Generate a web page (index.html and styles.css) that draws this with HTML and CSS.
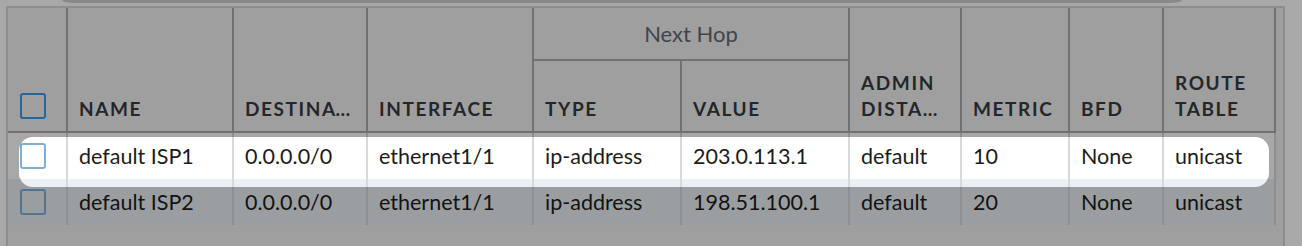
FILE: index.html
```html
<!DOCTYPE html>
<html lang="en">
<head>
<meta charset="utf-8">
<title>Static Routes</title>
<link rel="stylesheet" href="styles.css">
</head>
<body>
<div class="page">
  <div class="bar-slot"><div class="bar"></div></div>
  <div class="panel">
    <div class="grid">
      <div class="th th-tall th-chk"><span class="chk chk-head"></span></div>
      <div class="th th-tall"><span class="lbl">Name</span></div>
      <div class="th th-tall"><span class="lbl">Destination</span></div>
      <div class="th th-tall"><span class="lbl">Interface</span></div>
      <div class="th th-group">Next Hop</div>
      <div class="th th-tall"><span class="lbl lbl-2">Admin Distance</span></div>
      <div class="th th-tall"><span class="lbl">Metric</span></div>
      <div class="th th-tall"><span class="lbl">BFD</span></div>
      <div class="th th-tall"><span class="lbl lbl-2">Route Table</span></div>
      <div class="th"><span class="lbl">Type</span></div>
      <div class="th"><span class="lbl">Value</span></div>

      <div class="td td-chk row-a"><span class="chk"></span></div>
      <div class="td row-a">default ISP1</div>
      <div class="td row-a">0.0.0.0/0</div>
      <div class="td row-a">ethernet1/1</div>
      <div class="td row-a">ip-address</div>
      <div class="td row-a">203.0.113.1</div>
      <div class="td row-a">default</div>
      <div class="td row-a">10</div>
      <div class="td row-a">None</div>
      <div class="td row-a">unicast</div>

      <div class="td td-chk row-b"><span class="chk"></span></div>
      <div class="td row-b">default ISP2</div>
      <div class="td row-b">0.0.0.0/0</div>
      <div class="td row-b">ethernet1/1</div>
      <div class="td row-b">ip-address</div>
      <div class="td row-b">198.51.100.1</div>
      <div class="td row-b">default</div>
      <div class="td row-b">20</div>
      <div class="td row-b">None</div>
      <div class="td row-b">unicast</div>

      <div class="spotlight"></div>
    </div>
  </div>
</div>
</body>
</html>
```

FILE: styles.css
```css
* { box-sizing: border-box; }

html, body {
  margin: 0;
  padding: 0;
  background: #ffffff;
  overflow: hidden;
}

body {
  font-family: Lato, "Noto Sans", sans-serif;
  color: #1c1c1c;
}

.page {
  width: 1302px;
  height: 246px;
  padding-left: 6px;
}

.bar-slot {
  height: 6px;
  padding-left: 56px;
  overflow: hidden;
}

.bar {
  width: 1120px;
  height: 3px;
  background: #d0d0d0;
  border-radius: 0 0 12px 12px / 0 0 3px 3px;
}

.panel {
  width: 1279px;
  height: 240px;
  background: #f1f1f1;
  border: 2px solid #d6d6d6;
  border-bottom: 0;
  overflow: visible;
}

.grid {
  position: relative;
  display: grid;
  grid-template-columns: 60px 166px 134px 166px 148px 168px 112px 108px 94px 112px;
  grid-template-rows: 53px 72px 46px 46px;
}

.th {
  display: flex;
  align-items: flex-end;
  padding: 0 12px 9px 11px;
  border-right: 2px solid #a9adb1;
  border-bottom: 2px solid #a9adb1;
  color: #363c42;
  font-weight: 700;
  font-size: 19px;
  line-height: 26px;
  letter-spacing: 1.6px;
  text-transform: uppercase;
  min-width: 0;
}

.th-tall { grid-row: span 2; }

.th-chk {
  padding: 0 0 12px 12px;
}

.th-group {
  grid-column: span 2;
  align-items: center;
  justify-content: center;
  padding: 0;
  font-weight: 400;
  font-size: 22px;
  line-height: normal;
  letter-spacing: 0;
  text-transform: none;
  color: #636a72;
}

.lbl {
  display: block;
  min-width: 0;
  overflow: hidden;
  white-space: nowrap;
  text-overflow: ellipsis;
}

.lbl-2 {
  white-space: normal;
  display: -webkit-box;
  -webkit-box-orient: vertical;
  -webkit-line-clamp: 2;
}

.td {
  display: flex;
  align-items: center;
  padding: 0 6px 0 11px;
  border-right: 2px solid #d6dadd;
  font-size: 21.5px;
  white-space: nowrap;
  overflow: hidden;
}

.td-chk { padding-left: 12px; }

.row-a { background: #ffffff; }
.row-b { background: #ebf0f4; }

.chk {
  display: block;
  width: 26px;
  height: 26px;
  border: 2px solid #7db0d8;
  border-radius: 3px;
  background: transparent;
}

.row-a .chk { background: #ffffff; }

.chk-head {
  border-color: #3f9be0;
}

.spotlight {
  position: absolute;
  left: 11px;
  top: 129px;
  width: 1250px;
  height: 50px;
  border-radius: 14px;
  box-shadow: 0 0 0 3000px rgba(0, 0, 0, 0.34);
  pointer-events: none;
}
```
